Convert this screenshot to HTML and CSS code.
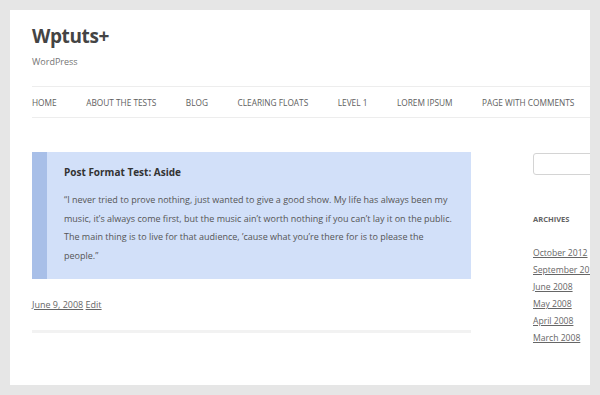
FILE: index.html
```html
<!DOCTYPE html>
<html lang="en">
<head>
  <meta charset="UTF-8" />
  <meta name="viewport" content="width=device-width, initial-scale=1.0"/>
  <title>Wptuts+ | WordPress</title>
  <link rel="stylesheet" href="styles.css">
</head>
<body>

  <div class="page">

    <!-- header -->
    <header class="site-header">
      <h1 class="site-title">Wptuts+</h1>
      <h2 class="site-description">WordPress</h2>

      <nav class="main-nav">
        <a href="#">Home</a>
        <a href="#">About The Tests</a>
        <a href="#">Blog</a>
        <a href="#">Clearing Floats</a>
        <a href="#">Level 1</a>
        <a href="#">Lorem Ipsum</a>
        <a href="#">Page with comments</a>
      </nav>
    </header>

    <div class="site-main">

      <!-- posts -->
      <div class="content">
        <article class="post-aside">
          <div class="aside">
            <h3 class="aside-title">Post Format Test: Aside</h3>
            <p class="aside-text">“I never tried to prove nothing, just wanted to give a good show. My life has always been my music, it’s always come first, but the music ain’t worth nothing if you can’t lay it on the public. The main thing is to live for that audience, ’cause what you’re there for is to please the people.”</p>
          </div>
          <footer class="entry-meta">
            <a href="#">June 9, 2008</a> <a href="#">Edit</a>
          </footer>
        </article>
      </div>

      <!-- sidebar -->
      <aside class="sidebar">
        <input class="search" type="text" />
        <h3 class="widget-title">Archives</h3>
        <ul class="archives">
          <li><a href="#">October 2012</a></li>
          <li><a href="#">September 2012</a></li>
          <li><a href="#">June 2008</a></li>
          <li><a href="#">May 2008</a></li>
          <li><a href="#">April 2008</a></li>
          <li><a href="#">March 2008</a></li>
        </ul>
      </aside>

    </div>
  </div>

</body>
</html>
```

FILE: styles.css
```css
html, body {
  margin: 0;
  padding: 0;
}

body {
  background: #e6e6e6;
  padding: 10px;
  font-family: 'Open Sans', sans-serif;
  color: #444;
}

.page {
  background: #fff;
  height: 375px;
  width: 580px;
  overflow: hidden;
  padding-left: 22px;
  box-sizing: border-box;
}

.site-header {
  padding-top: 12px;
}

.site-title {
  margin: 0;
  font-size: 19px;
  letter-spacing: -0.4px;
  line-height: 28px;
  font-weight: 700;
  color: #444;
}

.site-description {
  margin: 4px 0 0;
  font-size: 9px;
  line-height: 16px;
  font-weight: 400;
  color: #757575;
}

.main-nav {
  margin-top: 16px;
  border-top: 1px solid #ededed;
  border-bottom: 1px solid #ededed;
  height: 30px;
  display: flex;
  align-items: center;
  white-space: nowrap;
}

.main-nav a {
  font-size: 8.3px;
  text-transform: uppercase;
  color: #5e5e5e;
  text-decoration: none;
  margin-right: 29.5px;
}

.site-main {
  display: flex;
  gap: 62px;
  margin-top: 34px;
}

.content {
  width: 439px;
  flex-shrink: 0;
}

.aside {
  background: #d2e0f9;
  border-left: 15px solid #a8bfe8;
  padding: 13px 18px 13px 17px;
}

.aside-title {
  margin: 0;
  font-size: 10px;
  line-height: 14px;
  font-weight: 700;
  color: #333;
}

.aside-text {
  margin: 12px 0 0;
  font-size: 9px;
  line-height: 18.7px;
  color: #555;
}

.entry-meta {
  margin-top: 18px;
  padding-bottom: 17px;
  border-bottom: 3px solid #f2f2f2;
  font-size: 9px;
  line-height: 16px;
}

.entry-meta a,
.archives a {
  color: #666;
  text-decoration: underline;
}

.sidebar {
  width: 120px;
  flex-shrink: 0;
}

.search {
  display: block;
  width: 110px;
  height: 22px;
  box-sizing: border-box;
  border: 1px solid #d4d4d4;
  border-radius: 3px;
  margin: 1px 0 0;
}

.widget-title {
  margin: 38px 0 0;
  font-size: 7.5px;
  line-height: 12px;
  font-weight: 700;
  text-transform: uppercase;
  color: #636363;
}

.archives {
  list-style: none;
  margin: 20px 0 0;
  padding: 0;
  font-size: 8.6px;
  line-height: 17px;
  white-space: nowrap;
}
```
